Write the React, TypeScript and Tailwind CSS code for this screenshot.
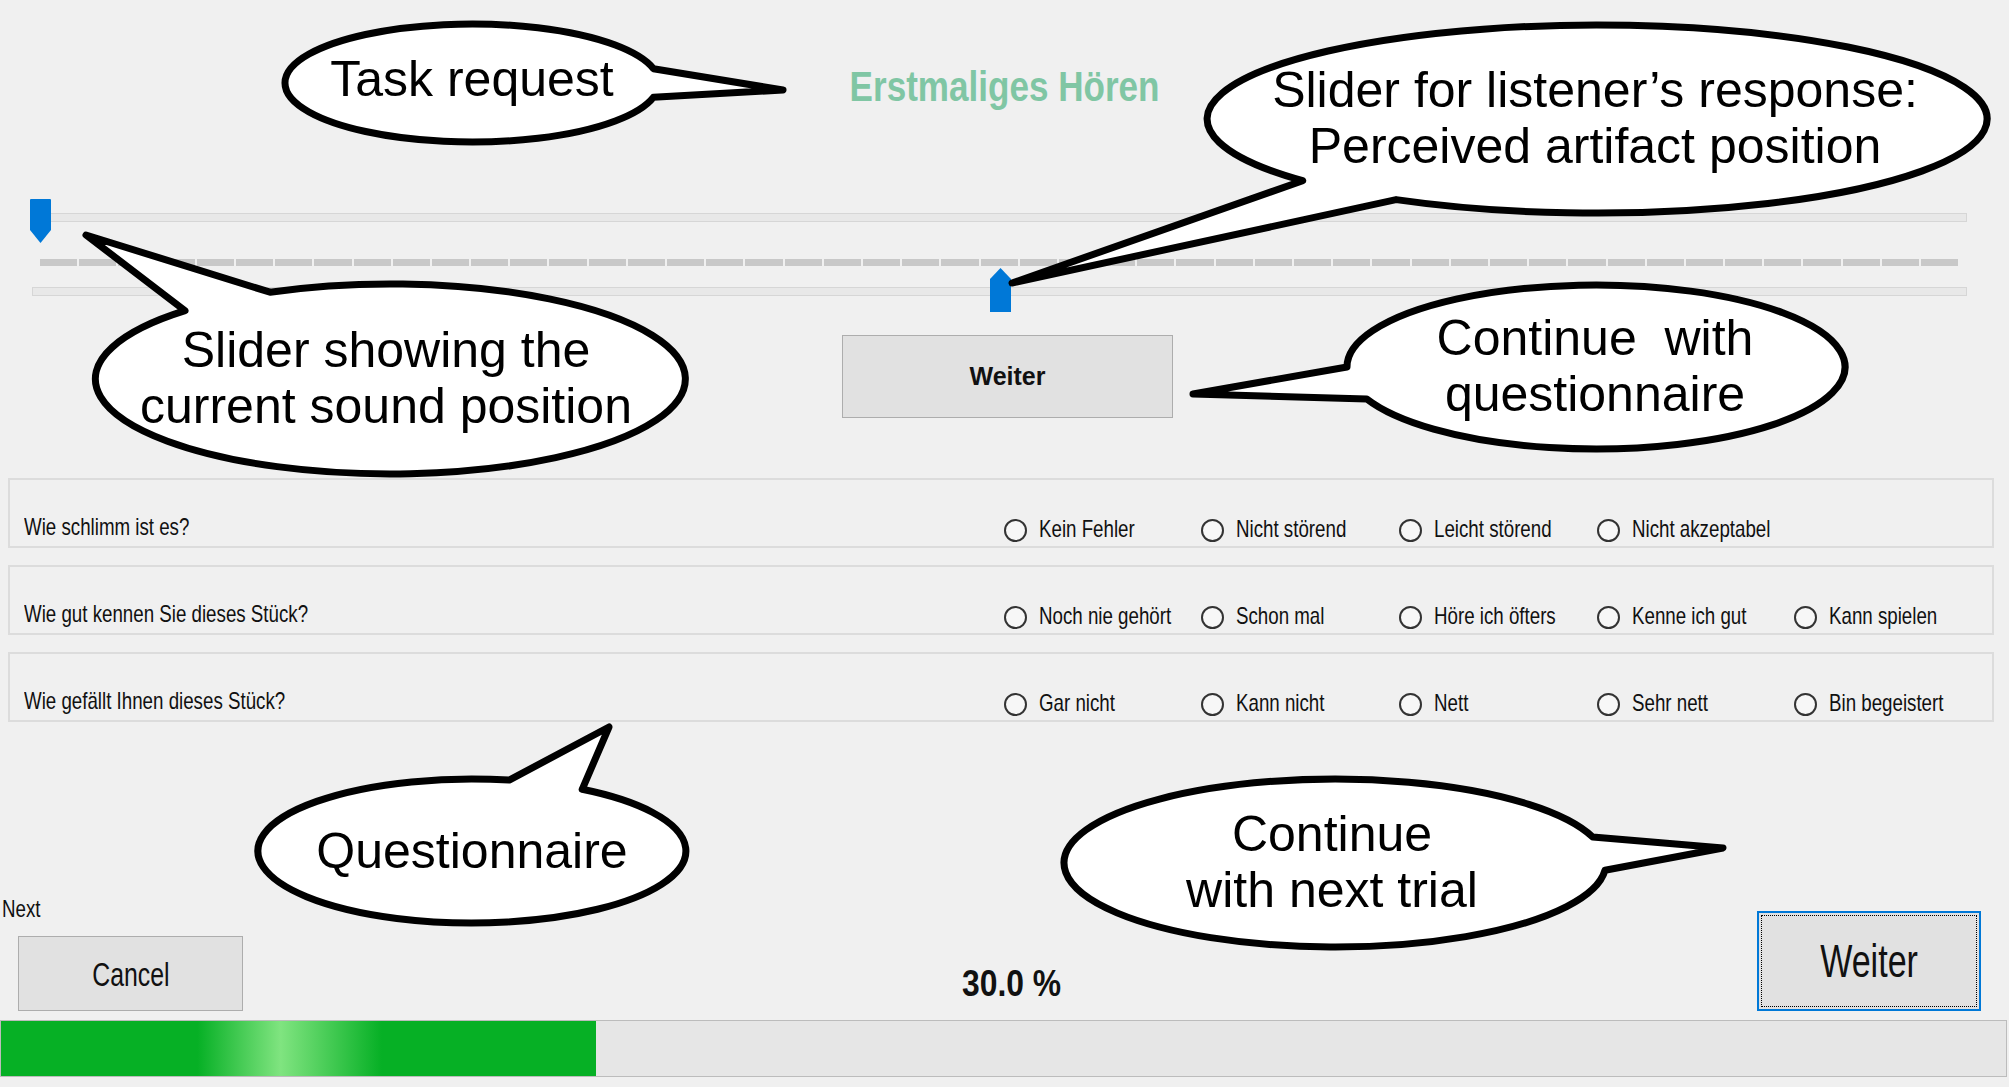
import React from 'react';

type Bubble = {
  cx: number;
  cy: number;
  rx: number;
  ry: number;
  a1: number;
  a2: number;
  tip: [number, number];
};

// speech bubbles drawn over the screenshot (ellipse + tail)
const bubbles: Bubble[] = [
  { cx: 472, cy: 83, rx: 187, ry: 59, a1: -14, a2: 14, tip: [783, 90] },
  { cx: 1597, cy: 119, rx: 390, ry: 94, a1: 121, a2: 139, tip: [1012, 283] },
  { cx: 390, cy: 379, rx: 295, ry: 95, a1: 226, a2: 246, tip: [86, 235] },
  { cx: 1596, cy: 367, rx: 249, ry: 82, a1: 157, a2: 180, tip: [1193, 394] },
  { cx: 472, cy: 851, rx: 214, ry: 72, a1: 280, a2: 301, tip: [609, 727] },
  { cx: 1335, cy: 863, rx: 271, ry: 84, a1: -18, a2: 5, tip: [1723, 848] },
];

function bubblePath(b: Bubble) {
  const pt = (a: number) => {
    const r = (a * Math.PI) / 180;
    return `${(b.cx + b.rx * Math.cos(r)).toFixed(1)} ${(b.cy + b.ry * Math.sin(r)).toFixed(1)}`;
  };
  return `M ${pt(b.a2)} A ${b.rx} ${b.ry} 0 1 1 ${pt(b.a1)} L ${b.tip[0]} ${b.tip[1]} Z`;
}

const questions = [
  { q: 'Wie schlimm ist es?', opts: ['Kein Fehler', 'Nicht störend', 'Leicht störend', 'Nicht akzeptabel'] },
  { q: 'Wie gut kennen Sie dieses Stück?', opts: ['Noch nie gehört', 'Schon mal', 'Höre ich öfters', 'Kenne ich gut', 'Kann spielen'] },
  { q: 'Wie gefällt Ihnen dieses Stück?', opts: ['Gar nicht', 'Kann nicht', 'Nett', 'Sehr nett', 'Bin begeistert'] },
];

const ticks = Array.from({ length: 49 }, (_, i) => i);

function Narrow({ children }: { children: React.ReactNode }) {
  return (
    <span className="inline-block origin-left scale-x-[0.78] whitespace-nowrap text-[24px] leading-[24px] text-[#111]">
      {children}
    </span>
  );
}

function Radio({ label }: { label: string }) {
  return (
    <div className="flex items-center gap-[12px]">
      <span className="mt-[4px] h-[23px] w-[23px] shrink-0 rounded-full border-2 border-[#333333] bg-[#f7f7f7]" />
      <Narrow>{label}</Narrow>
    </div>
  );
}

export default function App() {
  const progress = 30;

  return (
    <div className="relative h-[1087px] w-[2009px] overflow-hidden bg-[#f0f0f0] font-['Liberation_Sans',Arial,sans-serif] text-black">
      {/* title */}
      <div className="h-[190px] pt-[66px] text-center">
        <span className="inline-block scale-x-[0.835] text-[42px] font-bold leading-[42px] text-[#80c6a4]">
          Erstmaliges Hören
        </span>
      </div>

      {/* sliders */}
      <div className="relative flex h-[130px] flex-col pt-[23px]">
        <div className="ml-[32px] mr-[42px] h-[9px] border border-[#d6d6d6] bg-[#e8e8e8]" />
        <div className="ml-[40px] mr-[51px] mt-[37px] flex h-[7px] gap-[2px]">
          {ticks.map((t) => (
            <div key={t} className="h-full flex-1 bg-[#c8c8c8]" />
          ))}
        </div>
        <div className="ml-[32px] mr-[42px] mt-[21px] h-[9px] border border-[#d6d6d6] bg-[#e8e8e8]" />

        <svg className="absolute left-[30px] top-[9px]" width="21" height="44" viewBox="0 0 21 44">
          <path d="M1 0 H20 Q21 0 21 1 V31 L10.5 44 L0 31 V1 Q0 0 1 0 Z" fill="#0078d7" />
        </svg>
        <svg className="absolute left-[990px] top-[78px]" width="21" height="44" viewBox="0 0 21 44">
          <path d="M10.5 0 L21 11 V44 H0 V11 Z" fill="#0078d7" />
        </svg>
      </div>

      {/* continue with questionnaire */}
      <div className="mt-[15px] flex justify-center pl-[6px]">
        <button className="flex h-[83px] w-[331px] items-center justify-center border border-[#adadad] bg-[#e1e1e1] text-[25px] font-bold leading-[25px] text-[#111]">
          Weiter
        </button>
      </div>

      {/* questionnaire */}
      <div className="mt-[60px] flex flex-col gap-[17px]">
        {questions.map((row) => (
          <div
            key={row.q}
            className="mx-[8px] flex h-[70px] w-[1986px] items-end border-2 border-[#dcdcdc] pb-[4px] pl-[14px]"
          >
            <div className="w-[980px]">
              <Narrow>{row.q}</Narrow>
            </div>
            <div className="grid w-[989px] grid-cols-5">
              {row.opts.map((o) => (
                <Radio key={o} label={o} />
              ))}
            </div>
          </div>
        ))}
      </div>

      {/* bottom bar */}
      <div className="flex items-end">
        <div className="flex w-[243px] flex-col">
          <div className="mt-[175px] pl-[2px]">
            <Narrow>Next</Narrow>
          </div>
          <button className="ml-[18px] mt-[12px] flex h-[75px] w-[225px] items-center justify-center border border-[#adadad] bg-[#e1e1e1]">
            <span className="inline-block scale-x-[0.73] text-[34px] leading-[34px] text-[#111]">Cancel</span>
          </button>
        </div>
        <div className="mb-[8px] flex-1 pl-[24px] text-center">
          <span className="inline-block scale-x-[0.86] text-[37px] font-bold leading-[37px] text-[#111]">
            {progress.toFixed(1)} %
          </span>
        </div>
        <button className="mr-[28px] h-[100px] w-[224px] border-2 border-[#0078d7] bg-[#e1e1e1] p-[2px]">
          <div className="flex h-full w-full items-center justify-center border border-dotted border-black">
            <span className="inline-block scale-x-[0.74] text-[46px] leading-[46px] text-[#111]">Weiter</span>
          </div>
        </button>
      </div>

      <div className="mt-[9px] h-[57px] w-[2007px] border border-[#bcbcbc] bg-[#e6e6e6]">
        <div
          className="h-full bg-[linear-gradient(90deg,#06b025_0%,#06b025_33%,#80e480_47%,#06b025_64%,#06b025_100%)]"
          style={{ width: `${progress * 0.99}%` }}
        />
      </div>

      {/* annotation overlay */}
      <svg className="pointer-events-none absolute inset-0" width="2009" height="1087" viewBox="0 0 2009 1087">
        {bubbles.map((b, i) => (
          <path key={i} d={bubblePath(b)} fill="white" stroke="black" strokeWidth="7" strokeLinejoin="round" />
        ))}
      </svg>

      <div className="pointer-events-none absolute inset-0 text-[50px] leading-[56px] text-black">
        <div className="absolute left-[472px] top-[79px] -translate-x-1/2 -translate-y-1/2 whitespace-nowrap text-center">
          Task request
        </div>
        <div className="absolute left-[1595px] top-[118px] -translate-x-1/2 -translate-y-1/2 whitespace-nowrap text-center">
          Slider for listener’s response:
          <br />
          Perceived artifact position
        </div>
        <div className="absolute left-[386px] top-[378px] -translate-x-1/2 -translate-y-1/2 whitespace-nowrap text-center">
          Slider showing the
          <br />
          current sound position
        </div>
        <div className="absolute left-[1595px] top-[366px] -translate-x-1/2 -translate-y-1/2 whitespace-pre text-center">
          {'Continue  with\nquestionnaire'}
        </div>
        <div className="absolute left-[472px] top-[851px] -translate-x-1/2 -translate-y-1/2 whitespace-nowrap text-center">
          Questionnaire
        </div>
        <div className="absolute left-[1332px] top-[862px] -translate-x-1/2 -translate-y-1/2 whitespace-nowrap text-center">
          Continue
          <br />
          with next trial
        </div>
      </div>
    </div>
  );
}
